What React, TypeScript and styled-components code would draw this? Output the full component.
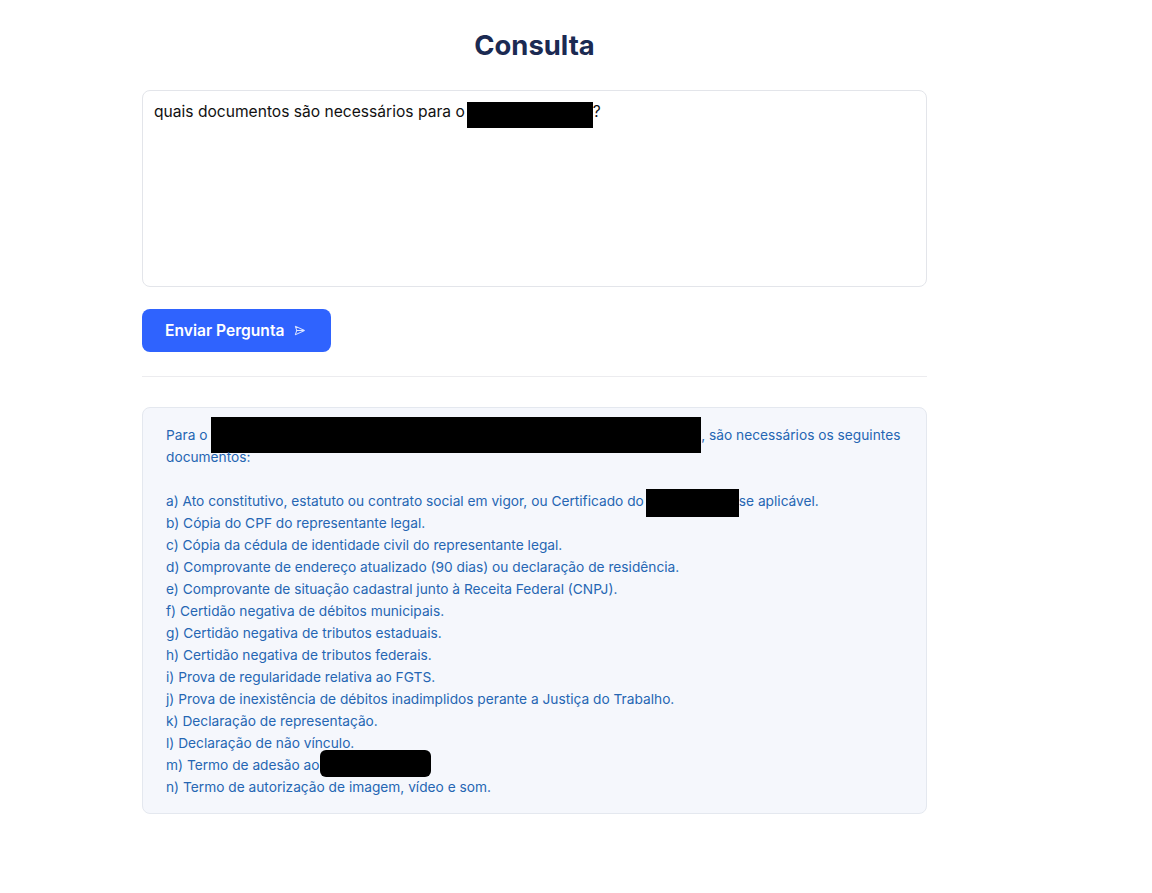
import React from "react";
import styled, { createGlobalStyle } from "styled-components";
import { SendHorizontal } from "lucide-react";

const Global = createGlobalStyle`
  html, body { margin: 0; padding: 0; background: #ffffff; }
  body { font-family: Inter, "Noto Sans", "Liberation Sans", sans-serif; }
  * { box-sizing: border-box; }
`;

const Page = styled.main`
  width: 785px;
  margin-left: 142px;
  padding-top: 26px;
  display: flex;
  flex-direction: column;
`;

const Title = styled.h1`
  margin: 0 0 26px;
  text-align: center;
  font-size: 27.4px;
  line-height: 38px;
  font-weight: 700;
  color: #1b2a52;
`;

const QueryBox = styled.div`
  height: 197px;
  border: 1px solid #e3e5ea;
  border-radius: 8px;
  padding: 11px 11px;
  font-size: 15.6px;
  line-height: 20px;
  color: #111111;
  background: #fff;
`;

const Button = styled.button`
  margin-top: 22px;
  align-self: flex-start;
  display: inline-flex;
  align-items: center;
  gap: 10px;
  height: 43px;
  padding: 0 26px 0 23px;
  border: none;
  border-radius: 8px;
  background: #2f63fe;
  color: #ffffff;
  font-family: inherit;
  font-size: 15.6px;
  font-weight: 600;
  cursor: pointer;
  svg { color: #dbe4ff; }
`;

const Divider = styled.hr`
  margin: 24px 0 30px;
  border: none;
  border-top: 1px solid #ececef;
`;

const Answer = styled.div`
  background: #f5f7fc;
  border: 1px solid #e4e8ef;
  border-radius: 8px;
  padding: 16px 24px 15px 23px;
  font-size: 13.72px;
  line-height: 22px;
  color: #2566b3;
  white-space: pre-wrap;
`;

const Redact = styled.span<{ $w: number; $h: number; $top: number; $lh: number; $r?: number; $ml?: number }>`
  display: inline-block;
  vertical-align: top;
  background: #000;
  width: ${(p) => p.$w}px;
  height: ${(p) => p.$h}px;
  margin-top: ${(p) => -p.$top}px;
  margin-bottom: ${(p) => -(p.$h - p.$top - p.$lh)}px;
  margin-left: ${(p) => p.$ml ?? 0}px;
  border-radius: ${(p) => p.$r ?? 0}px;
`;

export default function App() {
  return (
    <>
      <Global />
      <Page>
        <Title>Consulta</Title>
        <QueryBox>
          quais documentos são necessários para o
          <Redact $w={126} $h={26} $top={0} $lh={20} $ml={2} />?
        </QueryBox>
        <Button type="button">
          Enviar Pergunta
          <SendHorizontal size={11} strokeWidth={2.2} />
        </Button>
        <Divider />
        <Answer>
          {"Para o "}
          <Redact $w={490} $h={36} $top={7} $lh={22} />
          {", são necessários os seguintes documentos:\n\n"}
          {"a) Ato constitutivo, estatuto ou contrato social em vigor, ou Certificado do"}
          <Redact $w={93} $h={28} $top={1} $lh={22} $ml={2} />
          {"se aplicável.\n"}
          {"b) Cópia do CPF do representante legal.\n"}
          {"c) Cópia da cédula de identidade civil do representante legal.\n"}
          {"d) Comprovante de endereço atualizado (90 dias) ou declaração de residência.\n"}
          {"e) Comprovante de situação cadastral junto à Receita Federal (CNPJ).\n"}
          {"f) Certidão negativa de débitos municipais.\n"}
          {"g) Certidão negativa de tributos estaduais.\n"}
          {"h) Certidão negativa de tributos federais.\n"}
          {"i) Prova de regularidade relativa ao FGTS.\n"}
          {"j) Prova de inexistência de débitos inadimplidos perante a Justiça do Trabalho.\n"}
          {"k) Declaração de representação.\n"}
          {"l) Declaração de não vínculo.\n"}
          {"m) Termo de adesão ao"}
          <Redact $w={111} $h={27} $top={4} $lh={22} $r={6} $ml={1} />
          {"\n"}
          {"n) Termo de autorização de imagem, vídeo e som."}
        </Answer>
      </Page>
    </>
  );
}
